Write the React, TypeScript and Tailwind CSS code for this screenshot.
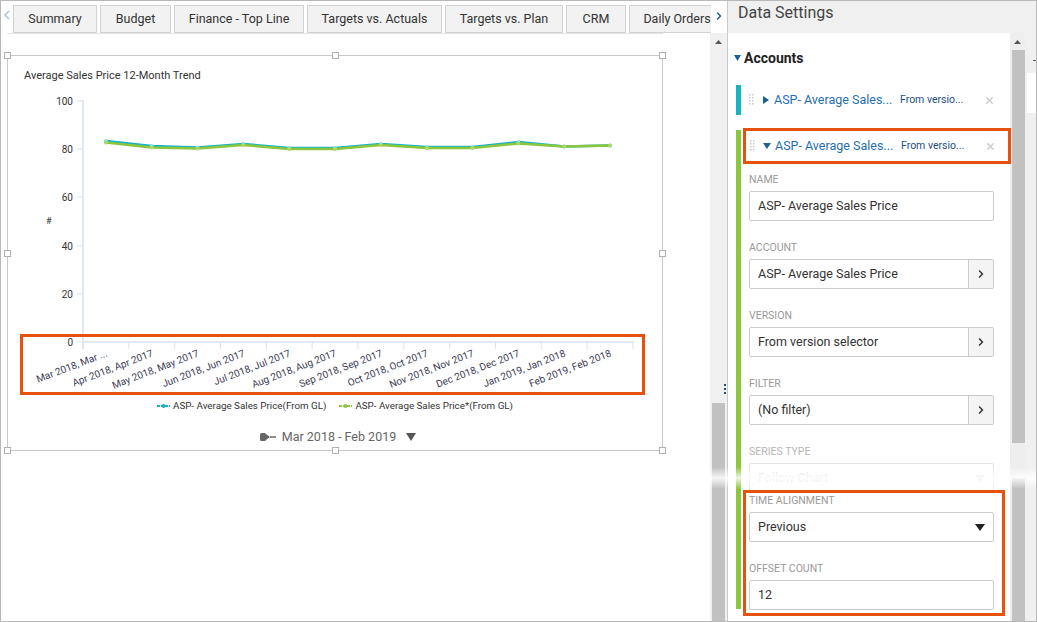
import { ChevronRight, X } from 'lucide-react';

const tabs = [
  { name: 'Summary', w: 'w-[84px]' },
  { name: 'Budget', w: 'w-[71px]' },
  { name: 'Finance - Top Line', w: 'w-[130px]' },
  { name: 'Targets vs. Actuals', w: 'w-[135px]' },
  { name: 'Targets vs. Plan', w: 'w-[118px]' },
  { name: 'CRM', w: 'w-[60px]' },
  { name: 'Daily Orders', w: 'w-[96px]' },
];

const months = [
  'Mar 2018, Mar ...',
  'Apr 2018, Apr 2017',
  'May 2018, May 2017',
  'Jun 2018, Jun 2017',
  'Jul 2018, Jul 2017',
  'Aug 2018, Aug 2017',
  'Sep 2018, Sep 2017',
  'Oct 2018, Oct 2017',
  'Nov 2018, Nov 2017',
  'Dec 2018, Dec 2017',
  'Jan 2019, Jan 2018',
  'Feb 2019, Feb 2018',
];

// plot coords (svg origin = global 8, 90)
const cyan = [51, 56, 57.5, 54, 58, 58, 54, 57, 57, 52, 56.5, 55.5];
const green = [52.5, 57.5, 58.5, 55, 59, 59, 55, 58, 58, 53.5, 56.5, 55.5];
const axisX = 75;
const step = 45.83;
const yTicks = [
  { v: '100', y: 11 },
  { v: '80', y: 59 },
  { v: '60', y: 107 },
  { v: '40', y: 156 },
  { v: '20', y: 204 },
  { v: '0', y: 252 },
];

function Handle({ className }: { className: string }) {
  return <div className={`absolute h-[7px] w-[7px] border border-[#b0b0b0] bg-white ${className}`} />;
}

function Chart() {
  const cx = (i: number) => axisX + (i + 0.5) * step;
  return (
    <svg width="653" height="308" className="block">
      {yTicks.map((t) => (
        <g key={t.v}>
          <line x1="69" x2="75" y1={t.y} y2={t.y} stroke="#d9e1f0" strokeWidth="1" />
          <text x="65" y={t.y + 3.5} textAnchor="end" fontSize="10" fill="#333">
            {t.v}
          </text>
        </g>
      ))}
      <text x="38" y="134" fontSize="9" fill="#333">#</text>
      <line x1={axisX} x2={axisX} y1="10" y2="259" stroke="#d9e1f0" strokeWidth="1.5" />
      <line x1={axisX} x2="626" y1="252" y2="252" stroke="#d9e1f0" strokeWidth="1.5" />
      {Array.from({ length: 13 }).map((_, i) => (
        <line key={i} x1={axisX + i * step} x2={axisX + i * step} y1="252" y2="259" stroke="#d9e1f0" strokeWidth="1" />
      ))}
      <polyline
        points={cyan.map((y, i) => `${cx(i)},${y}`).join(' ')}
        fill="none"
        stroke="#16b3c6"
        strokeWidth="2.5"
      />
      {cyan.map((y, i) => (
        <circle key={i} cx={cx(i)} cy={y} r="2" fill="#8fe0ea" />
      ))}
      <polyline
        points={green.map((y, i) => `${cx(i)},${y}`).join(' ')}
        fill="none"
        stroke="#8cc63f"
        strokeWidth="2.5"
      />
      {green.map((y, i) => (
        <circle key={i} cx={cx(i)} cy={y} r="2" fill="#a8d86a" />
      ))}
      {months.map((m, i) => (
        <text
          key={m}
          x={cx(i) + 2}
          y="266"
          textAnchor="end"
          fontSize="10"
          fill="#3b3b55"
          transform={`rotate(-21 ${cx(i) + 2} 266)`}
        >
          {m}
        </text>
      ))}
    </svg>
  );
}

function LegendMark({ color }: { color: string }) {
  return (
    <svg width="13" height="6" className="mr-[3px]">
      <line x1="0" x2="13" y1="3" y2="3" stroke={color} strokeWidth="2" strokeDasharray="3 1" />
      <circle cx="6.5" cy="3" r="2" fill={color} />
    </svg>
  );
}

function Grip() {
  return (
    <svg width="5" height="12" className="shrink-0">
      {[0, 3, 6, 9].map((y) => (
        <g key={y}>
          <rect x="0" y={y} width="1.5" height="1.5" fill="#c8c8c8" />
          <rect x="3" y={y} width="1.5" height="1.5" fill="#c8c8c8" />
        </g>
      ))}
    </svg>
  );
}

function Field({
  label,
  value,
  kind,
}: {
  label: string;
  value: string;
  kind?: 'chevron' | 'select' | 'disabled';
}) {
  const disabled = kind === 'disabled';
  return (
    <div className="mb-[20px]">
      <div className={`mb-[4px] h-[14px] text-[10.5px] leading-[14px] ${disabled ? 'text-[#b5b5b5]' : 'text-[#999]'}`}>
        {label}
      </div>
      <div
        className={`flex h-[30px] w-[245px] items-center rounded-[2px] border ${
          disabled ? 'border-[#e6e6e6]' : 'border-[#ccc]'
        } bg-white`}
      >
        <span className={`flex-1 pl-[8px] text-[12.5px] ${disabled ? 'text-[#ddd]' : 'text-[#333]'}`}>{value}</span>
        {kind === 'chevron' && (
          <span className="flex h-full w-[25px] items-center justify-center border-l border-[#ccc] bg-[#f4f4f4]">
            <ChevronRight size={12} strokeWidth={3} className="text-[#333]" />
          </span>
        )}
        {(kind === 'select' || disabled) && (
          <svg width="10" height="7" className="mr-[8px]">
            <polygon points="0,0 10,0 5,7" fill={disabled ? '#ddd' : '#222'} />
          </svg>
        )}
      </div>
    </div>
  );
}

function AccountRow({ open }: { open: boolean }) {
  return (
    <div className="flex h-[32px] items-center pl-[9px]">
      <Grip />
      <svg width="8" height="8" className="ml-[8px] mr-[4px]">
        {open ? <polygon points="0,1 8,1 4,7" fill="#1d5f95" /> : <polygon points="1,0 7,4 1,8" fill="#1d5f95" />}
      </svg>
      <span className="w-[126px] truncate text-[12.5px] text-[#1f6eb0]">ASP- Average Sales...</span>
      <span className="w-[84px] text-[10.5px] text-[#1d4f80]">From versio...</span>
      <X size={11} strokeWidth={3} className="text-[#c8c8c8]" />
    </div>
  );
}

export default function App() {
  return (
    <div className="relative flex h-[622px] w-[1037px] overflow-hidden border border-[#b8b8b8] bg-white font-['Roboto',sans-serif]">
      {/* left: tabs + dashboard */}
      <div className="flex w-[726px] flex-col">
        <div className="flex h-[32px] items-start">
          <div className="flex w-[12px] items-center justify-center pt-[9px]">
            <svg width="6" height="10">
              <polyline points="5,1 1,5 5,9" fill="none" stroke="#a9c0d6" strokeWidth="1.5" />
            </svg>
          </div>
          <div className="flex flex-1 gap-[3px] overflow-hidden pt-[4px]">
            {tabs.map((t) => (
              <div
                key={t.name}
                className={`flex h-[28px] shrink-0 items-center justify-center border border-[#d2d2d2] bg-[#f2f2f2] text-[12.5px] text-[#333] ${t.w}`}
              >
                {t.name}
              </div>
            ))}
          </div>
          <div className="flex w-[16px] items-center justify-center pt-[9px]">
            <ChevronRight size={12} strokeWidth={3} className="text-[#1f5c99]" />
          </div>
        </div>
        <div className="flex flex-1">
          <div className="flex-1">
            <div className="ml-[6px] h-px w-[656px] bg-[#e4e4e4]" />
            <div className="relative ml-[6px] mt-[21px] h-[396px] w-[656px] border border-[#c8c8c8]">
              <Handle className="-left-[4px] -top-[4px]" />
              <Handle className="left-[324px] -top-[4px]" />
              <Handle className="-right-[4px] -top-[4px]" />
              <Handle className="-left-[4px] top-[194px]" />
              <Handle className="-right-[4px] top-[194px]" />
              <Handle className="-left-[4px] -bottom-[4px]" />
              <Handle className="left-[324px] -bottom-[4px]" />
              <Handle className="-right-[4px] -bottom-[4px]" />
              <div className="h-[34px] pl-[16px] pt-[13px] text-[11px] leading-[14px] text-[#333]">
                Average Sales Price 12-Month Trend
              </div>
              <Chart />
              <div className="flex h-[16px] items-center justify-center gap-[13px] text-[9.8px] text-[#333]">
                <span className="flex items-center">
                  <LegendMark color="#16b3c6" />
                  ASP- Average Sales Price(From GL)
                </span>
                <span className="flex items-center">
                  <LegendMark color="#8cc63f" />
                  ASP- Average Sales Price*(From GL)
                </span>
              </div>
              <div className="mt-[13px] flex h-[20px] items-center justify-center pl-[6px] text-[12.5px] text-[#666]">
                <svg width="17" height="10" className="mr-[5px]">
                  <rect x="0" y="1" width="6" height="8" rx="1.5" fill="#666" />
                  <polygon points="6,2 10,5 6,8" fill="#666" />
                  <line x1="10" x2="16" y1="5" y2="5" stroke="#666" strokeWidth="1.5" />
                </svg>
                Mar 2018 - Feb 2019
                <svg width="10" height="8" className="ml-[10px]">
                  <polygon points="0,0 10,0 5,8" fill="#555" />
                </svg>
              </div>
              {/* highlight around x-axis labels */}
              <div className="absolute left-[12px] top-[278px] h-[61px] w-[625px] border-[3px] border-[#e8500e]" />
            </div>
          </div>
          {/* left scrollbar */}
          <div className="flex w-[17px] flex-col bg-[#f0f0f0]">
            <div className="flex h-[17px] items-center justify-center">
              <svg width="7" height="4">
                <polygon points="0,4 7,4 3.5,0" fill="#555" />
              </svg>
            </div>
            <div className="flex-1" />
            <div className="mx-[2px] h-[218px] bg-[#c1c1c1]" />
          </div>
        </div>
      </div>

      {/* right: data settings */}
      <div className="flex w-[310px] flex-col border-l border-[#c9c9c9] bg-[#f0f0f0]">
        <div className="h-[32px] pl-[10px] pt-[2px] text-[16px] leading-[20px] text-[#444]">Data Settings</div>
        <div className="flex flex-1">
          <div className="w-[282px] bg-white pt-[16px]">
            <div className="flex h-[18px] items-center pl-[6px] text-[14px] font-bold text-[#222]">
              <svg width="7" height="6" className="mr-[3px]">
                <polygon points="0,0 7,0 3.5,6" fill="#1d5f95" />
              </svg>
              Accounts
            </div>
            <div className="ml-[8px] mt-[18px] flex h-[30px] items-center border-l-[5px] border-[#17b4c6]">
              <div className="-ml-px">
                <AccountRow open={false} />
              </div>
            </div>
            <div className="relative ml-[8px] mt-[15px] h-[479px] border-l-[5px] border-[#8cc63f]">
              <AccountRow open />
              <div className="pl-[8px] pt-[11px]">
                <Field label="NAME" value="ASP- Average Sales Price" />
                <Field label="ACCOUNT" value="ASP- Average Sales Price" kind="chevron" />
                <Field label="VERSION" value="From version selector" kind="chevron" />
                <Field label="FILTER" value="(No filter)" kind="chevron" />
                <div className="-mb-[19px]">
                  <Field label="SERIES TYPE" value="Follow Chart" kind="disabled" />
                </div>
                <Field label="TIME ALIGNMENT" value="Previous" kind="select" />
                <Field label="OFFSET COUNT" value="12" />
              </div>
              <div className="absolute -top-[2px] left-[2px] h-[36px] w-[268px] border-[3px] border-[#e8500e]" />
              <div className="absolute left-[2px] top-[360px] h-[126px] w-[262px] border-[3px] border-[#e8500e]" />
            </div>
          </div>
          {/* right scrollbar */}
          <div className="flex w-[15px] flex-col bg-[#eeeeee]">
            <div className="flex h-[17px] items-center justify-center">
              <svg width="7" height="4">
                <polygon points="0,4 7,4 3.5,0" fill="#555" />
              </svg>
            </div>
            <div className="ml-[2px] h-[393px] bg-[#c1c1c1]" />
            <div className="h-[35px]" />
            <div className="ml-[2px] flex-1 bg-[#c1c1c1]" />
          </div>
          <div className="w-[12px] pt-[27px]">
            <div className="ml-[8px] h-px w-[4px] bg-[#555]" />
            <div className="ml-[2px] mt-[12px] h-[40px] bg-white" />
          </div>
        </div>
      </div>

      {/* splitter grip */}
      <div className="absolute left-[723px] top-[383px] flex flex-col gap-[2px]">
        <div className="h-[2px] w-[2px] bg-[#1d4f80]" />
        <div className="h-[2px] w-[2px] bg-[#1d4f80]" />
        <div className="h-[2px] w-[2px] bg-[#1d4f80]" />
      </div>
      {/* torn screenshot seam */}
      <div className="absolute left-[700px] top-[466px] h-[22px] w-[337px] bg-linear-to-b from-transparent via-white/85 to-transparent" />
    </div>
  );
}
